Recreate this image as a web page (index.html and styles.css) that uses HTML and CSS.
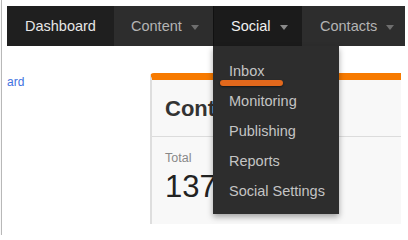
FILE: index.html
```html
<!DOCTYPE html>
<html>
<head>
<meta charset="utf-8">
<link rel="stylesheet" href="styles.css">
</head>
<body>
<div class="frame">
  <nav class="navbar">
    <div class="nav-item dash">Dashboard</div>
    <div class="nav-item content">Content<span class="caret"></span></div>
    <div class="nav-item social">Social<span class="caret"></span>
      <ul class="dropdown">
        <li>Inbox</li>
        <li>Monitoring</li>
        <li>Publishing</li>
        <li>Reports</li>
        <li>Social Settings</li>
      </ul>
      <span class="mark"></span>
    </div>
    <div class="nav-item contacts">Contacts<span class="caret"></span></div>
  </nav>
  <div class="main">
    <div class="side"><a class="crumb" href="#">ard</a></div>
    <div class="card">
      <div class="card-head">Contacts</div>
      <div class="card-body">
        <div class="label">Total</div>
        <div class="value">137</div>
      </div>
    </div>
  </div>
</div>
</body>
</html>
```
FILE: styles.css
```css
html, body {
  margin: 0;
  padding: 0;
  background: #ffffff;
  font-family: "Liberation Sans", Arial, sans-serif;
}
.frame {
  margin-left: 1px;
  width: 398px;
  height: 229px;
  padding: 6px 3px 0 5px;
  border-left: 1px solid #b8b8b8;
  background: #ffffff;
  box-shadow: 2px 2px 3px rgba(0,0,0,0.45);
  overflow: hidden;
}
.navbar {
  display: flex;
  height: 40px;
  background: #2d2d2d;
}
.nav-item {
  position: relative;
  display: flex;
  align-items: center;
  box-sizing: border-box;
  padding-left: 18px;
  font-size: 14.5px;
  color: #b4b4b4;
}
.dash {
  width: 107px;
  background: #1f1f1f;
  color: #e6e6e6;
}
.content { width: 99px; padding-left: 17px; }
.social {
  width: 89px;
  background: #1b1b1b;
  color: #f0f0f0;
  border-left: 1px solid #111;
  padding-left: 17px;
}
.contacts { flex: 1; }
.caret {
  display: inline-block;
  margin-left: 9px;
  margin-top: 2px;
  width: 0;
  height: 0;
  border-left: 4.5px solid transparent;
  border-right: 4.5px solid transparent;
  border-top: 5px solid #6e6e6e;
}
.social .caret { border-top-color: #8a8a8a; }
.dropdown {
  position: absolute;
  top: 40px;
  left: -1px;
  width: 126px;
  height: 168px;
  margin: 0;
  padding: 10px 0 0 0;
  box-sizing: border-box;
  list-style: none;
  background: #2d2d2d;
  box-shadow: 0 3px 6px rgba(0,0,0,0.35);
  z-index: 5;
}
.dropdown li {
  height: 30px;
  line-height: 30px;
  padding-left: 16px;
  font-size: 14.5px;
  color: #c4c4c4;
}
.mark {
  position: absolute;
  top: 74px;
  left: 6px;
  width: 63px;
  height: 6px;
  border-radius: 3px;
  background: #e2681c;
  box-shadow: 0 1px 2px rgba(0,0,0,0.5);
  z-index: 6;
}
.main {
  display: flex;
}
.side {
  width: 143px;
  padding-top: 29px;
  font-size: 12px;
}
.crumb {
  color: #3f72e0;
  text-decoration: none;
}
.card {
  margin-top: 27px;
  width: 251px;
  height: 151px;
  box-sizing: border-box;
  background: #f8f8f8;
  border-top: 7px solid #f77a00;
  border-left: 2px solid #dedede;
  border-top-left-radius: 4px;
}
.card-head {
  height: 57px;
  box-sizing: border-box;
  border-bottom: 1px solid #dcdcdc;
  padding: 16px 0 0 13px;
  font-size: 22px;
  font-weight: bold;
  color: #333;
}
.card-body {
  padding: 14px 0 0 13px;
}
.label {
  font-size: 12.5px;
  color: #888;
}
.value {
  margin-top: 4px;
  font-size: 31px;
  color: #222;
}
```
